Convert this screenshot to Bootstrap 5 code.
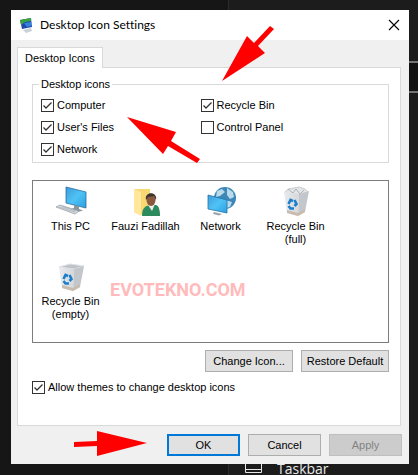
<!DOCTYPE html>
<html lang="en">
<head>
<meta charset="utf-8">
<meta name="viewport" content="width=device-width, initial-scale=1">
<title>Desktop Icon Settings</title>
<link href="https://cdn.jsdelivr.net/npm/bootstrap@5.3.0/dist/css/bootstrap.min.css" rel="stylesheet">
<style>
  body { font: 11px/14px "Liberation Sans", Arial, sans-serif; color: #000; background: #171717; }
  .desktop { min-height: 100vh; padding: 10px 9px 12px 11px; }
  .behind { inset: 0; color: #e8e8e8; }
  .behind-side { flex: 0 0 229px; background: #161616; border-right: 1px solid #2c2c2c; }
  .behind-main { background: #1c1c1c; }
  .behind-field { margin-top: 61px; height: 32px; background: #121212; border: solid #747474; border-width: 2px 0; }
  .behind-item { font: 14px/18px "Open Sans", sans-serif; padding-left: 16px; gap: 15px; height: 16px; }
  .behind-item svg { margin-top: 2px; }
  .dialog-win { background: #f0f0f0; }
  .titlebar { height: 30px; padding: 0 9px 0 8px; background: #fff; gap: 7px; }
  .titlebar h1 { font: 12px/16px Lato, "Open Sans", sans-serif; font-variant-ligatures: none; color: #000; }
  .close-btn { width: 12px; height: 12px; }
  .dialog-body { padding: 7px 8px 8px 6px; }
  .tab-btn { height: 21px; padding: 0 7px; background: #fff; border: 1px solid #d9d9d9; border-bottom: 0; margin-bottom: -1px; z-index: 1; color: #000; }
  .tab-panel { background: #fff; border: 1px solid #d9d9d9; padding: 9px 11px 31px 14px; }
  .group { border: 1px solid #d9d9d9; padding: 0 28px 6px 8px; margin-bottom: 17px; }
  .group legend { font-size: 11px; line-height: 14px; padding: 0 2px; margin: 0 0 7px -2px; float: none; width: auto; }
  .group .row { row-gap: 8px; }
  .tick { min-height: 14px; gap: 3px; }
  .tick input { appearance: none; width: 13px; height: 13px; margin: 0; border: 1px solid #333; background: #fff; flex: none; }
  .tick input:checked { background: #fff url("data:image/svg+xml,%3Csvg xmlns='http://www.w3.org/2000/svg' viewBox='0 0 11 11'%3E%3Cpath d='M1.5 5.5 4 8 9.5 2.5' fill='none' stroke='%23333' stroke-width='1.3'/%3E%3C/svg%3E"); }
  .icon-box { border: 1px solid #7c7c7c; min-height: 163px; margin-bottom: 7px; padding: 5px 0 0; }
  .icon-grid { display: grid; grid-template-columns: repeat(4, 75px); row-gap: 15px; }
  .icon-grid svg { width: 32px; height: 32px; margin-bottom: 2px; }
  .icon-cell { line-height: 13px; }
  .win-btn { height: 22px; padding: 0; background: #e1e1e1; border: 1px solid #adadad; color: #000; width: 88px; }
  .dlg-btn { width: 73px; }
  .dialog-body footer { margin-right: -1px; }
  .win-btn.default { border: 2px solid #0078d7; }
  .win-btn:disabled { background: #ccc; border-color: #bfbfbf; color: #838383; }
  .watermark { left: 110px; top: 278px; font: bold 18px/24px Roboto, "Open Sans", sans-serif; color: #fbb; }
  .arrow { fill: #f00; }
  .arrow-a { left: 222px; top: 26px; }
  .arrow-b { left: 127px; top: 117px; }
  .arrow-c { left: 74px; top: 431px; }
</style>
<script src="https://cdn.jsdelivr.net/npm/bootstrap@5.3.0/dist/js/bootstrap.bundle.min.js"></script>
</head>
<body>
<svg class="position-absolute" width="0" height="0" aria-hidden="true">
  <defs>
    <linearGradient id="scr" x1="0" y1="0" x2="1" y2="1"><stop stop-color="#3d9bdb"/><stop offset=".5" stop-color="#4fc3f4"/><stop offset="1" stop-color="#2b9fe2"/></linearGradient>
    <linearGradient id="binl"><stop stop-color="#e9ebed"/><stop offset="1" stop-color="#d4d8db"/></linearGradient>
    <symbol id="bin" viewBox="0 0 32 32">
      <path d="M4 6 19 8 18 30 7 27z" fill="url(#binl)"/>
      <path d="M19 8 29 5 25 26 18 30z" fill="#c3c7cb"/>
      <path d="M7 24 18 27 25 23V26L18 30 7 27z" fill="#c9bcae"/>
      <g fill="none" stroke="#1c7fcd" stroke-width="2.6"><path d="M8.500 18 10.500 14 13 15"/><path d="M14.500 14 16.500 18 14.500 20"/><path d="M8.500 20 10.500 22.500 14 22.500"/></g>
    </symbol>
  </defs>
</svg>
<div class="desktop position-relative overflow-hidden">
  <div class="behind position-absolute d-flex">
    <div class="behind-side"></div>
    <div class="behind-main flex-grow-1 d-flex flex-column justify-content-between">
      <div class="behind-field"></div>
      <div class="behind-item d-flex">
        <svg width="17" height="12" viewBox="0 0 17 12" fill="none" stroke="#e8e8e8"><path d="M.5 .5V10.500H16.500V.5zM.5 7.500H16.500"/></svg>
        <span>Taskbar</span>
      </div>
    </div>
  </div>

  <main class="dialog-win position-relative">
    <header class="titlebar d-flex align-items-center">
      <svg width="14" height="16" viewBox="0 0 14 16"><path d="M1 3 12 1 13 10 3 12z" fill="#2547ad"/><path d="M1 3 12 1 12 4 6 5 2 8z" fill="#3ba53c"/><path d="M5 6 12 5 12 9 8 10z" fill="#2f83df"/><path d="M4 13 12 11 13 14 7 16z" fill="#c9d2d8"/></svg>
      <h1 class="m-0">Desktop Icon Settings</h1>
      <button type="button" class="close-btn btn p-0 border-0 ms-auto d-flex" aria-label="Close"><svg width="12" height="12" viewBox="0 0 12 12" stroke="#000" stroke-width="1.1"><path d="M1 1 11 11M11 1 1 11"/></svg></button>
    </header>
    <div class="dialog-body">
      <div class="d-flex" role="tablist"><button type="button" class="tab-btn position-relative" role="tab" aria-selected="true">Desktop Icons</button></div>
      <section class="tab-panel">
        <fieldset class="group">
          <legend>Desktop icons</legend>
          <div class="row gx-0">
            <div class="col-6 d-flex"><label class="tick d-flex align-items-center"><input type="checkbox" checked>Computer</label></div>
            <div class="col-6 d-flex"><label class="tick d-flex align-items-center"><input type="checkbox" checked>Recycle Bin</label></div>
            <div class="col-6 d-flex"><label class="tick d-flex align-items-center"><input type="checkbox" checked>User's Files</label></div>
            <div class="col-6 d-flex"><label class="tick d-flex align-items-center"><input type="checkbox">Control Panel</label></div>
            <div class="col-6 d-flex"><label class="tick d-flex align-items-center"><input type="checkbox" checked>Network</label></div>
          </div>
        </fieldset>
        <div class="icon-box">
          <div class="icon-grid text-center">
            <div class="icon-cell"><svg viewBox="0 0 32 32"><path d="M11 1 31 6V22L11 17z" fill="url(#scr)" stroke="#2a6c9c" stroke-width=".8"/><path d="M19 19 24 20.500V23L28 24.500 23 26 16 23 19 22z" fill="#8b979f"/><path d="M1 21 5 19 24 25 20 28z" fill="#d7dde1" stroke="#8d989f" stroke-width=".7"/><path d="M4 21 20 26M7 20.500 21 25" stroke="#9aa5ac" stroke-width=".6"/></svg><div>This PC</div></div>
            <div class="icon-cell"><svg viewBox="0 0 32 32"><path d="M4 3H20V27L10 29 4 26z" fill="#f8d775"/><path d="M4 3 11 6V30L4 26z" fill="#ffe79b"/><path d="M12 30C12 22 15 20 20 19L26 19C29 20 30 24 30 30z" fill="#2d8a5d"/><path d="M18 19 22 25 25 18z" fill="#eee"/><ellipse cx="21" cy="14" rx="4.500" ry="6" fill="#8b5a3c"/><path d="M16 14C14 5 28 5 26 14L24 10 18 11z" fill="#3a3431"/></svg><div>Fauzi Fadillah</div></div>
            <div class="icon-cell"><svg viewBox="0 0 32 32"><circle cx="20" cy="12" r="11" fill="#3d87b8"/><path d="M12 5 17 3 20 6 15 10 11 11zM22 2 28 6 29 11 25 13 22 9zM20 14 27 16 25 21 21 22z" fill="#b9dbe9"/><path d="M3 9 22 14V27L3 23z" fill="url(#scr)" stroke="#2675aa" stroke-width=".8"/><path d="M9 26 17 28 14 29.500 8 28z" fill="#9ba5ab"/></svg><div>Network</div></div>
            <div class="icon-cell"><svg viewBox="0 0 32 32"><path d="M4 7 8 3 14 2 19 1 25 3 28 6 19 10z" fill="#e3e6e8" stroke="#b8bcc0" stroke-width=".7"/><path d="M8 3 13 7 16 3 20 8 24 4" fill="none" stroke="#aeb3b7"/><use href="#bin"/></svg><div>Recycle Bin<br>(full)</div></div>
            <div class="icon-cell"><svg viewBox="0 0 32 32"><path d="M4 6 15 3 29 5 19 8z" fill="#bfc3c7" stroke="#e0e2e4"/><use href="#bin"/></svg><div>Recycle Bin<br>(empty)</div></div>
          </div>
        </div>
        <div class="d-flex justify-content-end gap-2">
          <button type="button" class="win-btn">Change Icon...</button>
          <button type="button" class="win-btn">Restore Default</button>
        </div>
        <div class="d-flex pt-2"><label class="tick d-flex align-items-center"><input type="checkbox" checked>Allow themes to change desktop icons</label></div>
      </section>
      <footer class="d-flex justify-content-end gap-2 pt-2">
        <button type="button" class="win-btn dlg-btn default">OK</button>
        <button type="button" class="win-btn dlg-btn">Cancel</button>
        <button type="button" class="win-btn dlg-btn" disabled>Apply</button>
      </footer>
    </div>
  </main>

  <div class="watermark position-absolute">EVOTEKNO.COM</div>
  <svg class="arrow arrow-a position-absolute" width="52" height="56" viewBox="0 0 52 56"><path d="M0 55 25 10 32 17 48 0 52 3 36 20 43 27z"/></svg>
  <svg class="arrow arrow-b position-absolute" width="74" height="47" viewBox="0 0 74 47"><path d="M0 0 49 15 44 24 73 42 70 46 41 29 36 37z"/></svg>
  <svg class="arrow arrow-c position-absolute" width="73" height="25" viewBox="0 0 73 25"><path d="M73 12 23 0V10L0 11V16L23 15V25z"/></svg>
</div>
</body>
</html>
